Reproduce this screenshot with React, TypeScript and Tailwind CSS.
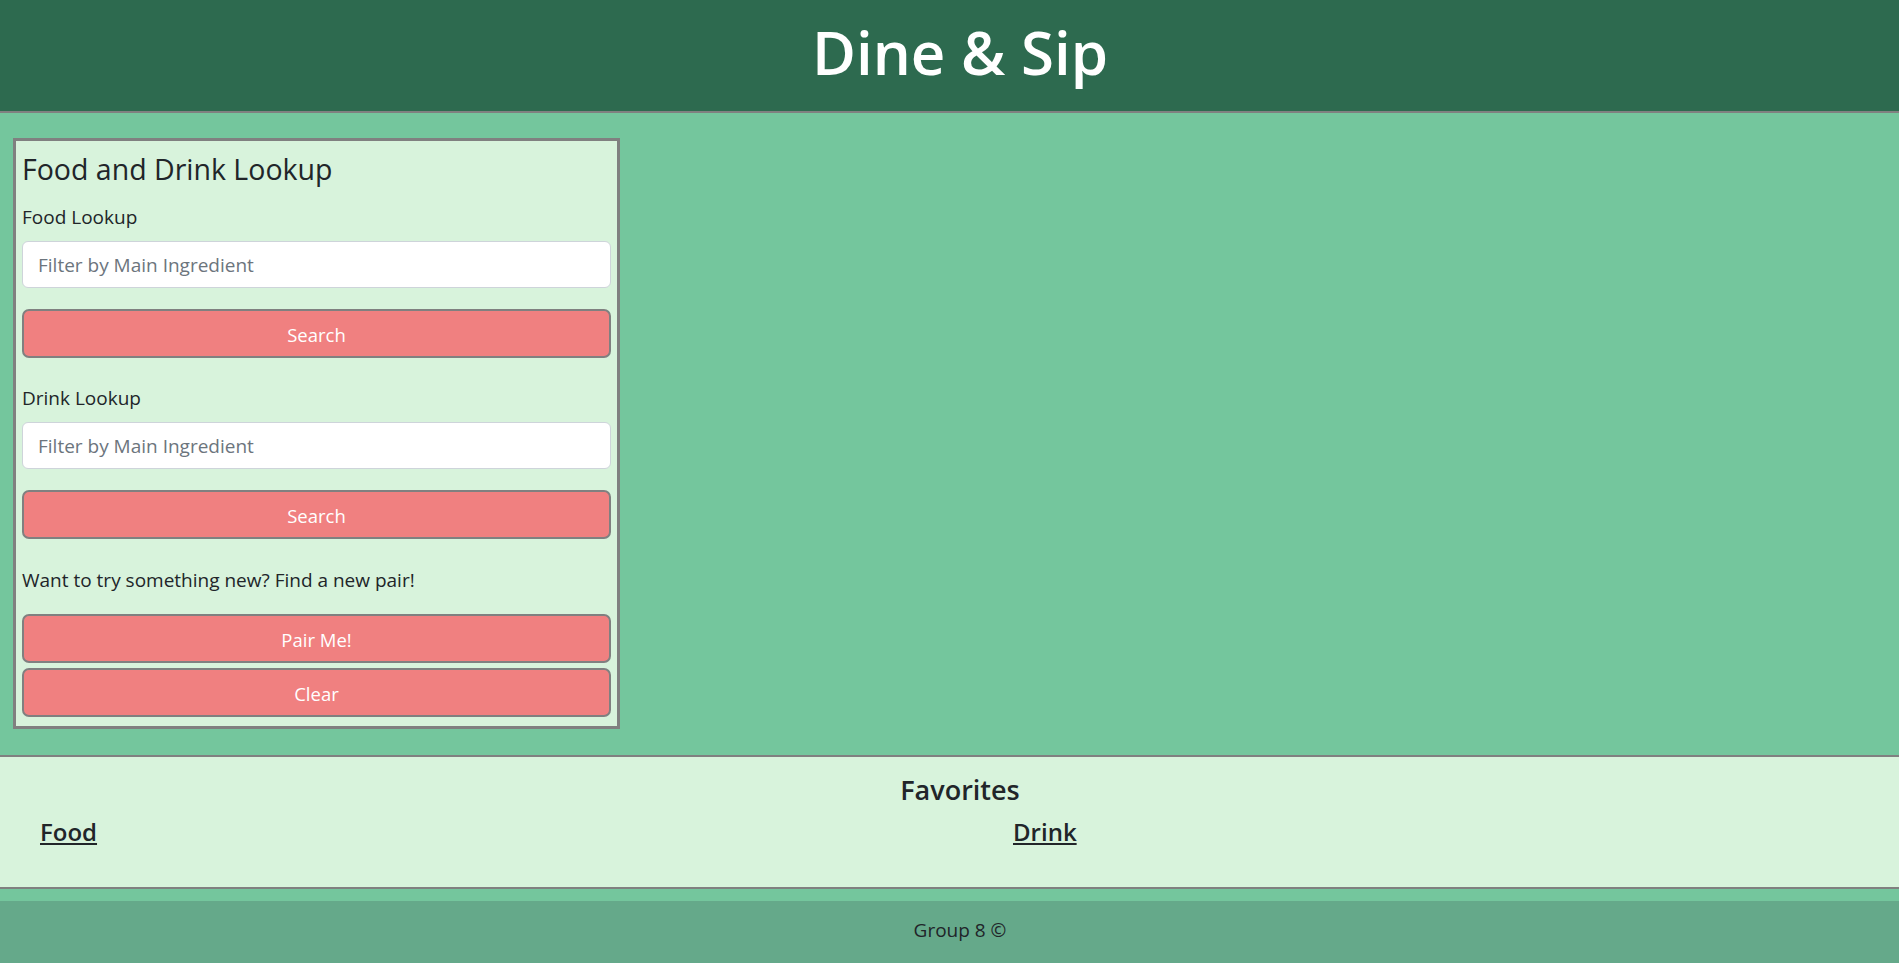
const font = { fontFamily: '"Open Sans", "Noto Sans", sans-serif' };

function PinkButton({ label, className = "" }: { label: string; className?: string }) {
  return (
    <button
      type="button"
      className={`block h-[49px] w-full rounded-[7px] border-2 border-[#808080] bg-[#f08080] pt-[2px] text-[18.5px] text-white ${className}`}
    >
      {label}
    </button>
  );
}

function Lookup({ title, top }: { title: string; top: string }) {
  return (
    <div>
      <p className={`${top} text-[19px] leading-[24px] text-[#212529]`}>{title}</p>

      <input
        type="text"
        placeholder="Filter by Main Ingredient"
        className="mt-[12px] block h-[47px] w-full rounded-[6px] border border-[#ced4da] bg-white px-[15px] text-[19px] text-[#212529] placeholder:text-[#6c757d] outline-none"
      />

      <PinkButton label="Search" className="mt-[21px]" />
    </div>
  );
}

export default function App() {
  return (
    <div style={font} className="flex min-h-[963px] flex-col bg-[#74c69d]">

      <header className="h-[113px] border-b-2 border-[#808080] bg-[#2d6a4f] pt-[22px] pl-[21px] text-center">
        <h1 className="text-[60px] font-semibold leading-[60px] text-white">
          Dine &amp; Sip
        </h1>
      </header>

      <main className="flex-1">

        <section className="ml-[13px] mt-[25px] w-[607px] border-[3px] border-[#808080] bg-[#d8f3dc] px-[6px] pt-[11px] pb-[9px]">

          <h3 className="text-[28.5px] leading-[34px] text-[#212529]">
            Food and Drink Lookup
          </h3>

          <Lookup title="Food Lookup" top="mt-[19px]" />

          <Lookup title="Drink Lookup" top="mt-[28px]" />

          <p className="mt-[29px] text-[19px] leading-[24px] text-[#212529]">
            Want to try something new? Find a new pair!
          </p>

          <PinkButton label="Pair Me!" className="mt-[22px]" />
          <PinkButton label="Clear" className="mt-[5px]" />

        </section>

        <section className="mt-[26px] h-[134px] border-y-2 border-[#808080] bg-[#d8f3dc] pt-[17px]">

          <h2 className="pl-[21px] text-center text-[27px] font-semibold leading-[32px] text-[#212529]">
            Favorites
          </h2>

          <div className="mt-[11px] flex pl-[40px]">
            <div className="w-[973px]">
              <a href="#" className="text-[24px] font-semibold leading-[30px] text-[#212529] underline">
                Food
              </a>
            </div>
            <div>
              <a href="#" className="text-[24px] font-semibold leading-[30px] text-[#212529] underline">
                Drink
              </a>
            </div>
          </div>

        </section>

      </main>

      <footer className="mt-[12px] flex h-[62px] items-center justify-center bg-[#65a98a] pl-[21px] pb-[4px]">
        <p className="text-[19px] text-[#212529]">Group 8 ©</p>
      </footer>

    </div>
  );
}
